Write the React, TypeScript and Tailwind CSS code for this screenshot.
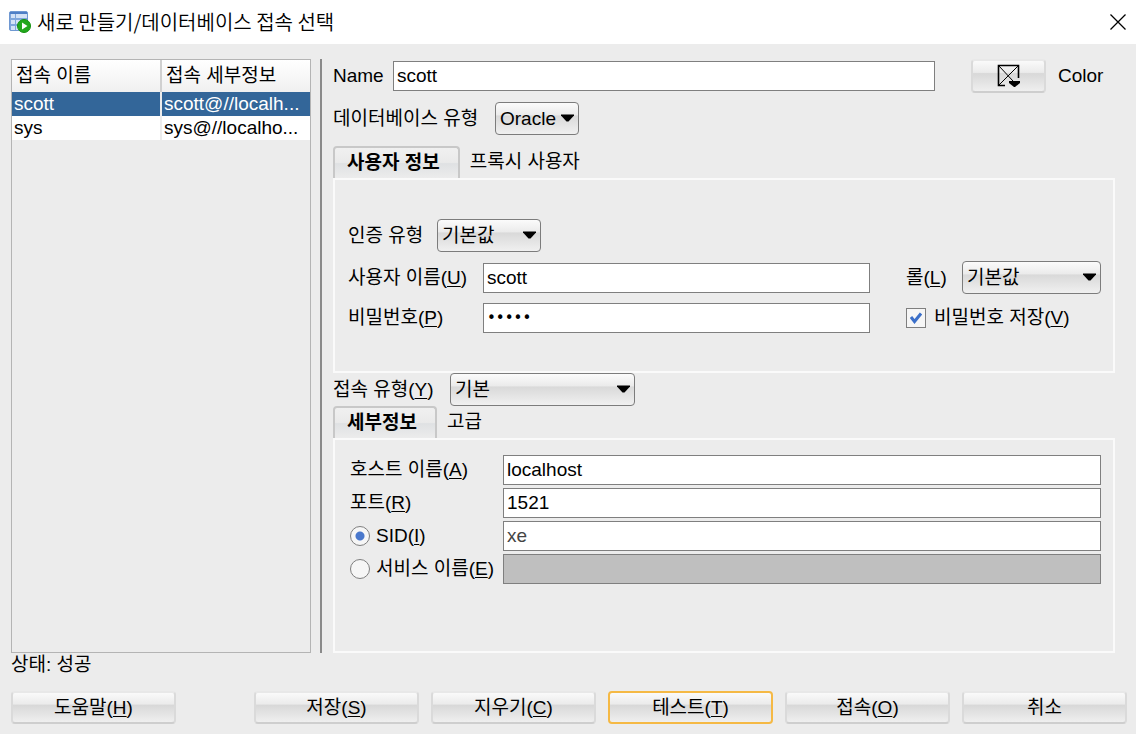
import { useState } from 'react'
import type { ReactNode } from 'react'

const connections = [
  { name: 'scott', details: 'scott@//localh...' },
  { name: 'sys', details: 'sys@//localho...' },
]

function DatabaseIcon() {
  return (
    <svg width="22" height="22" viewBox="0 0 22 22" aria-hidden="true">
      <rect x="0.5" y="0.5" width="18" height="19" rx="1.5" fill="#7fa6dc" stroke="#6f98d2" />
      <rect x="1" y="1" width="17" height="2" fill="#4f7fc6" />
      <g fill="#d3e2f6">
        <rect x="2" y="3" width="4" height="4" />
        <rect x="7" y="3" width="11" height="4" />
        <rect x="2" y="9" width="4" height="4" />
        <rect x="7" y="9" width="11" height="4" />
        <rect x="2" y="15" width="4" height="4" />
        <rect x="7" y="15" width="11" height="4" />
      </g>
      <circle cx="15" cy="15" r="6.5" fill="#22a81c" stroke="#149010" />
      <path d="M13 11.5 18.5 15 13 18.5z" fill="#fff" />
    </svg>
  )
}

function ColorIcon() {
  return (
    <svg width="24" height="24" viewBox="0 0 24 24" fill="none" stroke="#000" aria-hidden="true">
      <path d="M8 21.5H1.5V1.5H21.5V14" strokeWidth="1.6" />
      <path d="M2 2 16 17M21 2 2 21" strokeWidth="1" />
      <path d="M12 17h11v2l-5 4h-1l-5-4z" fill="#000" stroke="none" />
    </svg>
  )
}

// Underlined mnemonic in parentheses, e.g. (U)
function Key({ children }: { children: string }) {
  return (
    <>
      (<span className="underline decoration-1 underline-offset-2">{children}</span>)
    </>
  )
}

function Combo({ id, value, className }: { id: string; value: string; className: string }) {
  return (
    <div className={`relative h-[33px] shrink-0 ${className}`}>
      <select
        id={id}
        defaultValue={value}
        className="h-full w-full appearance-none rounded-[4px] border border-[#7c7c7c] bg-[linear-gradient(#fbfbfb,#ebebeb_38%,#d9d9d9_42%,#f0f0f0)] pl-1"
      >
        <option>{value}</option>
      </select>
      <svg className="pointer-events-none absolute top-3 right-[5px]" width="13" height="8" viewBox="0 0 13 8" aria-hidden="true">
        <path d="M0 0.5h13v1L7.5 7.5h-2L0 1.5z" fill="#000" />
      </svg>
    </div>
  )
}

interface TextFieldProps {
  id: string
  value: string
  type?: string
  disabled?: boolean
  label?: string
  className?: string
}

function TextField({ id, value, type = 'text', disabled = false, label, className = '' }: TextFieldProps) {
  return (
    <input
      id={id}
      type={type}
      aria-label={label}
      defaultValue={value}
      disabled={disabled}
      className={`h-[30px] w-full min-w-0 flex-1 border border-[#7f7f7f] bg-white px-[3px] outline-none disabled:bg-[#bfbfbf] ${className}`}
    />
  )
}

function Tabs({ tabs }: { tabs: string[] }) {
  return (
    <div role="tablist" className="flex">
      {tabs.map((tab, i) => (
        <button
          key={tab}
          type="button"
          role="tab"
          aria-selected={i === 0}
          className={
            i === 0
              ? 'h-8 rounded-t-[4px] border-2 border-b-0 border-[#c8c8c8] bg-[linear-gradient(#f0f0f0,#eaeaea_48%,#dfe1e3_52%,#ececec)] pr-[18px] pl-3 font-bold'
              : 'h-8 px-2.5'
          }
        >
          {tab}
        </button>
      ))}
    </div>
  )
}

function FooterButton({ children, focused = false }: { children: ReactNode; focused?: boolean }) {
  return (
    <button
      type="button"
      className={`h-[33px] flex-1 rounded-[4px] border-2 bg-[linear-gradient(#fafafa,#ebebeb_38%,#d8d8d8_42%,#efefef)] ${
        focused ? 'border-[#f5b945]' : 'border-[#dadada] border-t-[#e8e8e8] border-b-[#cecece]'
      }`}
    >
      {children}
    </button>
  )
}

function ConnectionList() {
  return (
    <div className="w-[300px] shrink-0 border border-[#b4b4b4]">
      <table className="w-full table-fixed border-collapse text-left">
        <thead>
          <tr className="h-8 bg-linear-to-b from-white to-[#f0f0f0]">
            <th className="border-r-2 border-r-[#d0d0d0] px-1 font-normal">접속 이름</th>
            <th className="px-1 font-normal">접속 세부정보</th>
          </tr>
        </thead>
        <tbody>
          {connections.map((c, i) => (
            <tr key={c.name} className={i === 0 ? 'h-6 bg-[#336699] text-white' : 'h-6 bg-white'}>
              <td className="border-r-2 border-r-[#ececec] px-0.5 leading-6">{c.name}</td>
              <td className="px-0.5 leading-6 whitespace-nowrap">{c.details}</td>
            </tr>
          ))}
        </tbody>
      </table>
    </div>
  )
}

function UserInfo() {
  return (
    <div className="flex flex-col gap-[9px] border-2 border-[#fafafa] pt-[39px] pr-3 pb-[38px] pl-[13px]">
      <div className="flex items-center">
        <label htmlFor="auth" className="w-[89px] shrink-0">
          인증 유형
        </label>
        <Combo id="auth" value="기본값" className="w-[104px]" />
      </div>
      <div className="flex items-center">
        <label htmlFor="user" className="w-[135px] shrink-0">
          사용자 이름<Key>U</Key>
        </label>
        <TextField id="user" value="scott" />
        <label htmlFor="role" className="ml-9 w-14 shrink-0">
          롤<Key>L</Key>
        </label>
        <Combo id="role" value="기본값" className="w-[139px]" />
      </div>
      <div className="flex items-center">
        <label htmlFor="password" className="w-[135px] shrink-0">
          비밀번호<Key>P</Key>
        </label>
        <TextField id="password" type="password" value="scott" className="font-['DejaVu_Sans',sans-serif] text-[15px]" />
        <label className="ml-9 flex w-[195px] shrink-0 items-center gap-2">
          <span className="relative flex">
            <input type="checkbox" defaultChecked className="peer size-5 appearance-none border border-[#7f7f7f] bg-[#f6f6f6]" />
            <svg className="pointer-events-none absolute top-1 left-1 hidden peer-checked:block" width="12" height="12" viewBox="0 0 12 12" aria-hidden="true">
              <path d="M1 5 4.5 9.5 11 1.5" fill="none" stroke="#3b6fc9" strokeWidth="3" />
            </svg>
          </span>
          <span>
            비밀번호 저장<Key>V</Key>
          </span>
        </label>
      </div>
    </div>
  )
}

function Details() {
  const [mode, setMode] = useState('sid')
  const radio =
    'size-5 appearance-none rounded-full border border-[#7f7f7f] bg-[#f6f6f6] checked:bg-[radial-gradient(circle,#4a78cc_0_4px,#f6f6f6_5px)]'

  return (
    <div className="grid flex-1 grid-cols-[153px_1fr] content-start items-center gap-y-[3px] border-2 border-[#fafafa] py-[15px] pr-3 pl-[15px]">
      <label htmlFor="host">
        호스트 이름<Key>A</Key>
      </label>
      <TextField id="host" value="localhost" />
      <label htmlFor="port">
        포트<Key>R</Key>
      </label>
      <TextField id="port" value="1521" />
      <label className="flex items-center gap-1.5">
        <input type="radio" name="mode" checked={mode === 'sid'} onChange={() => setMode('sid')} className={radio} />
        <span>
          SID<Key>I</Key>
        </span>
      </label>
      <TextField id="sid" label="SID" value="xe" disabled={mode !== 'sid'} className="text-[#444444]" />
      <label className="flex items-center gap-1.5 whitespace-nowrap">
        <input type="radio" name="mode" checked={mode === 'service'} onChange={() => setMode('service')} className={radio} />
        <span>
          서비스 이름<Key>E</Key>
        </span>
      </label>
      <TextField id="service" label="서비스 이름" value="" disabled={mode !== 'service'} />
    </div>
  )
}

export default function App() {
  return (
    <div className="flex min-h-screen flex-col bg-[#ececec] font-['Liberation_Sans','Noto_Sans_CJK_KR',sans-serif] text-[19px] leading-7 text-black">
      <header className="flex h-11 items-center gap-1.5 bg-white pr-2.5 pl-[9px]">
        <DatabaseIcon />
        <h1 className="flex-1 font-['Noto_Sans_CJK_KR',sans-serif] text-[20px] font-[350]">새로 만들기/데이터베이스 접속 선택</h1>
        <button type="button" aria-label="닫기">
          <svg width="16" height="16" viewBox="0 0 16 16" aria-hidden="true">
            <path d="M0.5 0.5 15.5 15.5M15.5 0.5 0.5 15.5" stroke="#000" strokeWidth="1.3" />
          </svg>
        </button>
      </header>

      <main className="flex flex-1 pt-[15px] pr-[21px] pl-[11px]">
        <ConnectionList />
        <div className="ml-[9px] w-0.5 shrink-0 bg-[#8a8a8a]" />
        <form className="ml-[11px] flex min-w-0 flex-1 flex-col">
          <div className="flex items-center">
            <label htmlFor="name" className="w-[60px] shrink-0">
              Name
            </label>
            <TextField id="name" value="scott" />
            <button
              type="button"
              aria-labelledby="color"
              className="ml-9 flex h-[34px] w-[75px] shrink-0 items-center justify-center rounded-[4px] border-2 border-[#dadada] border-t-[#e8e8e8] border-b-[#cecece] bg-[linear-gradient(#fafafa,#ebebeb_38%,#d8d8d8_42%,#efefef)]"
            >
              <ColorIcon />
            </button>
            <span id="color" className="ml-3 w-[57px] shrink-0">
              Color
            </span>
          </div>
          <div className="mt-[9px] flex items-center">
            <label htmlFor="db" className="w-[162px] shrink-0">
              데이터베이스 유형
            </label>
            <Combo id="db" value="Oracle" className="w-[84px]" />
          </div>
          <div className="mt-[11px]">
            <Tabs tabs={['사용자 정보', '프록시 사용자']} />
            <UserInfo />
          </div>
          <div className="flex items-center">
            <label htmlFor="type" className="w-[117px] shrink-0">
              접속 유형<Key>Y</Key>
            </label>
            <Combo id="type" value="기본" className="w-[185px]" />
          </div>
          <div className="flex flex-1 flex-col">
            <Tabs tabs={['세부정보', '고급']} />
            <Details />
          </div>
        </form>
      </main>

      <p className="h-[38px] pl-[11px] leading-6">상태: 성공</p>

      <footer className="flex gap-3 pr-[9px] pb-2.5 pl-[11px]">
        <FooterButton>
          도움말<Key>H</Key>
        </FooterButton>
        <div className="w-[54px] shrink-0" />
        <FooterButton>
          저장<Key>S</Key>
        </FooterButton>
        <FooterButton>
          지우기<Key>C</Key>
        </FooterButton>
        <FooterButton focused>
          테스트<Key>T</Key>
        </FooterButton>
        <FooterButton>
          접속<Key>O</Key>
        </FooterButton>
        <FooterButton>취소</FooterButton>
      </footer>
    </div>
  )
}
